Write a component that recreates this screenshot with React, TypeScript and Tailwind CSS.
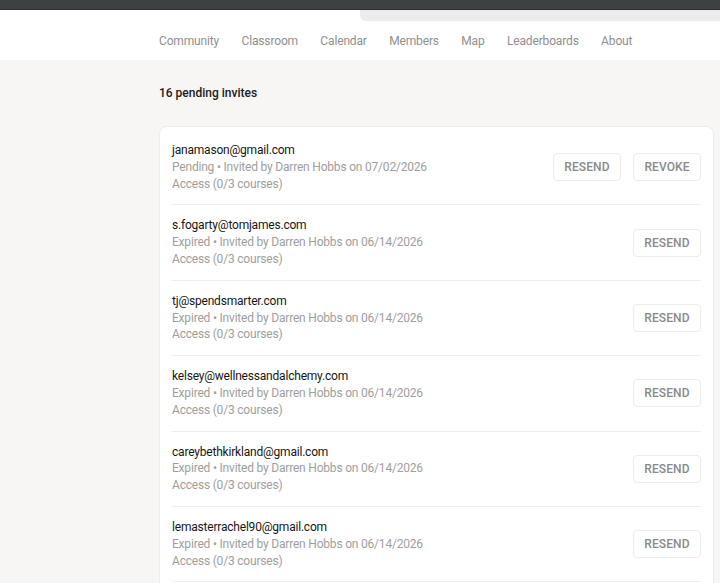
const NAV = ['Community', 'Classroom', 'Calendar', 'Members', 'Map', 'Leaderboards', 'About'];

interface Invite {
  email: string;
  status: 'Pending' | 'Expired';
  date: string;
}

const INVITES: Invite[] = [
  { email: 'janamason@gmail.com', status: 'Pending', date: '07/02/2026' },
  { email: 's.fogarty@tomjames.com', status: 'Expired', date: '06/14/2026' },
  { email: 'tj@spendsmarter.com', status: 'Expired', date: '06/14/2026' },
  { email: 'kelsey@wellnessandalchemy.com', status: 'Expired', date: '06/14/2026' },
  { email: 'careybethkirkland@gmail.com', status: 'Expired', date: '06/14/2026' },
  { email: 'lemasterrachel90@gmail.com', status: 'Expired', date: '06/14/2026' },
];

function ActionButton({ label }: { label: string }) {
  return (
    <button className="h-[28px] w-[68px] rounded-[4px] border border-[#ececec] bg-white text-[12px] font-medium tracking-[0.1px] text-[#8a8a8a]">
      {label}
    </button>
  );
}

function InviteRow({ invite, first }: { invite: Invite; first: boolean }) {
  return (
    <div className={`flex items-center justify-between py-3 ${first ? '' : 'border-t border-[#efefef]'}`}>
      <div className="flex flex-col text-[12px] leading-[16.8px] tracking-[-0.2px]">
        <span className="text-[#161616]">{invite.email}</span>
        <span className="text-[#9e9e9e]">
          {invite.status} • Invited by Darren Hobbs on {invite.date}
        </span>
        <span className="text-[#9e9e9e]">Access (0/3 courses)</span>
      </div>
      <div className="flex gap-3">
        {invite.status === 'Pending' && <ActionButton label="RESEND" />}
        <ActionButton label={invite.status === 'Pending' ? 'REVOKE' : 'RESEND'} />
      </div>
    </div>
  );
}

export default function App() {
  return (
    <div className="relative h-[583px] w-[720px] overflow-hidden bg-[#f7f6f4] font-['Roboto',sans-serif]">
      {/* browser chrome strip */}
      <div className="h-[10px] border-b border-[#2e3030] bg-[#3e4141]" />
      <div className="absolute left-[360px] top-[10px] h-[11px] w-[360px] rounded-bl-[6px] bg-[#ececec]" />

      {/* nav */}
      <div className="flex h-[50px] items-end bg-white pb-[10px] pl-[159px]">
        <nav className="flex gap-[22.4px] text-[12px] tracking-[-0.15px] text-[#8f8f8f]">
          {NAV.map((item) => (
            <span key={item}>{item}</span>
          ))}
        </nav>
      </div>

      <div className="pl-[159px] pr-[6px]">
        <div className="pt-[24px] text-[12px] font-medium text-[#202020]">16 pending invites</div>
        <div className="mt-[24px] rounded-lg border border-[#ececec] bg-white px-3 pt-[3px]">
          {INVITES.map((inv, i) => (
            <InviteRow key={inv.email} invite={inv} first={i === 0} />
          ))}
          <div className="h-[40px] border-t border-[#efefef]" />
        </div>
      </div>
    </div>
  );
}
